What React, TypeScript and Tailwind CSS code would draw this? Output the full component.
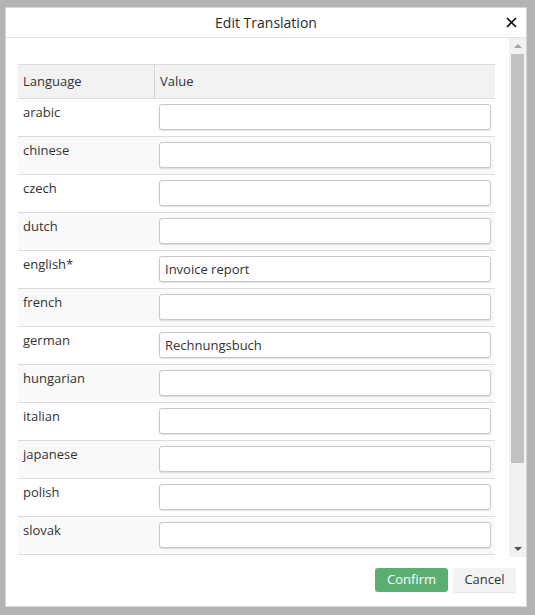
import React, { FC } from 'react'

const rows: { lang: string; value: string }[] = [
  { lang: 'arabic', value: '' },
  { lang: 'chinese', value: '' },
  { lang: 'czech', value: '' },
  { lang: 'dutch', value: '' },
  { lang: 'english*', value: 'Invoice report' },
  { lang: 'french', value: '' },
  { lang: 'german', value: 'Rechnungsbuch' },
  { lang: 'hungarian', value: '' },
  { lang: 'italian', value: '' },
  { lang: 'japanese', value: '' },
  { lang: 'polish', value: '' },
  { lang: 'slovak', value: '' },
]

const App: FC = () => {
  return (
    <div className="w-[535px] h-[615px] bg-[#b4b4b4] pt-[7px] pl-[5px] font-['Open_Sans',sans-serif] text-[13px] text-[#333]">
      <div className="w-[522px] h-[600px] bg-white border border-[#d6d6d6] flex flex-col">
        {/* title bar */}
        <div className="h-[30px] shrink-0 border-b border-[#e2e2e2] flex items-center relative">
          <div className="flex-1 text-center text-[14px] text-[#2a2a2a] font-medium">Edit Translation</div>
          <button className="absolute right-[8px] top-[7px] w-[14px] h-[14px] flex items-center justify-center">
            <svg width="11" height="11" viewBox="0 0 11 11">
              <path d="M1 1 L10 10 M10 1 L1 10" stroke="#111" strokeWidth="1.6" />
            </svg>
          </button>
        </div>

        {/* body */}
        <div className="h-[519px] shrink-0 flex">
          <div className="flex-1 overflow-hidden pt-[26px] pl-[12px] pr-[14px]">
            <div className="border-t border-[#dcdcdc]">
              <div className="h-[34px] bg-[#f2f2f2] flex border-b border-[#dcdcdc]">
                <div className="w-[137px] pl-[5px] flex items-center border-r border-[#d0d0d0]">Language</div>
                <div className="flex-1 pl-[5px] flex items-center">Value</div>
              </div>
              {rows.map((r, i) => (
                <div
                  key={r.lang}
                  className={`h-[38px] flex border-b border-[#dcdcdc] ${i % 2 === 1 ? 'bg-[#f9f9f9]' : 'bg-white'}`}
                >
                  <div className="w-[137px] pl-[5px] pt-[4px] leading-[18px]">{r.lang}</div>
                  <div className="flex-1 px-[4px] pt-[5px]">
                    <input
                      defaultValue={r.value}
                      className="w-full h-[26px] rounded-[3px] border border-[#c8c8c8] bg-white px-[5px] text-[13px] text-[#333] shadow-[0_1px_1px_rgba(0,0,0,0.12)] outline-none font-['Open_Sans',sans-serif]"
                    />
                  </div>
                </div>
              ))}
            </div>
          </div>

          {/* scrollbar */}
          <div className="w-[17px] shrink-0 bg-[#f1f1f1] flex flex-col items-center">
            <div className="h-[16px] flex items-center justify-center">
              <div className="w-0 h-0 border-l-[4px] border-r-[4px] border-b-[4px] border-l-transparent border-r-transparent border-b-[#a3a3a3]" />
            </div>
            <div className="w-[13px] h-[409px] bg-[#c1c1c1]" />
            <div className="flex-1" />
            <div className="h-[16px] flex items-center justify-center">
              <div className="w-0 h-0 border-l-[4px] border-r-[4px] border-t-[4px] border-l-transparent border-r-transparent border-t-[#505050]" />
            </div>
          </div>
        </div>

        {/* footer */}
        <div className="flex-1 flex items-start justify-end gap-[5px] pt-[11px] pr-[10px]">
          <button className="h-[24px] w-[73px] rounded-[3px] bg-[#5aae71] text-white text-[13px]">Confirm</button>
          <button className="h-[24px] w-[63px] rounded-[3px] bg-[#f3f3f3] text-[#333] text-[13px] shadow-[0_1px_1px_rgba(0,0,0,0.12)]">Cancel</button>
        </div>
      </div>
    </div>
  )
}

export default App
